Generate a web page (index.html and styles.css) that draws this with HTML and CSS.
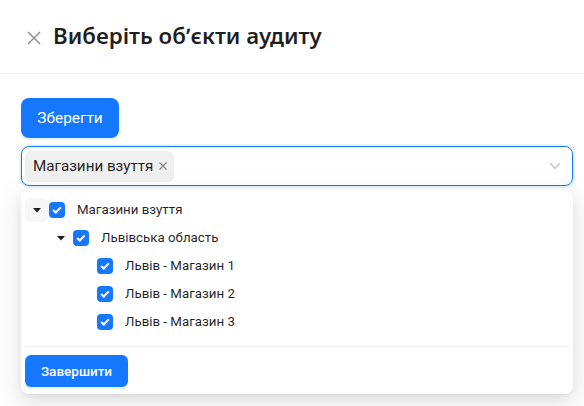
FILE: index.html
```html
<!DOCTYPE html>
<html lang="uk">
<head>
<meta charset="utf-8">
<link rel="stylesheet" href="styles.css">
</head>
<body>
<div class="drawer">
  <div class="header">
    <button class="close" aria-label="Закрити">
      <svg width="14" height="14" viewBox="0 0 14 14"><path d="M1 1 L13 13 M13 1 L1 13" stroke="currentColor" stroke-width="1.4" fill="none"/></svg>
    </button>
    <h1 class="title">Виберіть обʼєкти аудиту</h1>
  </div>
  <div class="content">
    <button class="btn btn-lg">Зберегти</button>
    <div class="select">
      <span class="tag">Магазини взуття<svg class="tag-x" width="10" height="10" viewBox="0 0 10 10"><path d="M1.5 1.5 L8.5 8.5 M8.5 1.5 L1.5 8.5" stroke="currentColor" stroke-width="1.2" fill="none"/></svg></span>
      <svg class="chev" width="12" height="8" viewBox="0 0 12 8"><path d="M1 1 L6 6.5 L11 1" stroke="currentColor" stroke-width="1.2" fill="none"/></svg>
    </div>
    <div class="dropdown">
      <div class="tree">
        <div class="node">
          <span class="switcher hover"><svg width="10" height="10" viewBox="0 0 10 10"><path d="M1 3 L9 3 L5 7.5 Z" fill="currentColor"/></svg></span>
          <span class="cb"><svg width="10" height="8" viewBox="0 0 10 8"><path d="M1.2 4 L3.8 6.5 L8.8 1.4" stroke="#fff" stroke-width="2" fill="none"/></svg></span>
          <span class="label">Магазини взуття</span>
        </div>
        <div class="node lvl1">
          <span class="switcher"><svg width="10" height="10" viewBox="0 0 10 10"><path d="M1 3 L9 3 L5 7.5 Z" fill="currentColor"/></svg></span>
          <span class="cb"><svg width="10" height="8" viewBox="0 0 10 8"><path d="M1.2 4 L3.8 6.5 L8.8 1.4" stroke="#fff" stroke-width="2" fill="none"/></svg></span>
          <span class="label">Львівська область</span>
        </div>
        <div class="node lvl2">
          <span class="switcher"></span>
          <span class="cb"><svg width="10" height="8" viewBox="0 0 10 8"><path d="M1.2 4 L3.8 6.5 L8.8 1.4" stroke="#fff" stroke-width="2" fill="none"/></svg></span>
          <span class="label">Львів - Магазин 1</span>
        </div>
        <div class="node lvl2">
          <span class="switcher"></span>
          <span class="cb"><svg width="10" height="8" viewBox="0 0 10 8"><path d="M1.2 4 L3.8 6.5 L8.8 1.4" stroke="#fff" stroke-width="2" fill="none"/></svg></span>
          <span class="label">Львів - Магазин 2</span>
        </div>
        <div class="node lvl2">
          <span class="switcher"></span>
          <span class="cb"><svg width="10" height="8" viewBox="0 0 10 8"><path d="M1.2 4 L3.8 6.5 L8.8 1.4" stroke="#fff" stroke-width="2" fill="none"/></svg></span>
          <span class="label">Львів - Магазин 3</span>
        </div>
      </div>
      <div class="divider"></div>
      <div class="footer">
        <button class="btn btn-md">Завершити</button>
      </div>
    </div>
  </div>
</div>
</body>
</html>
```

FILE: styles.css
```css
* { box-sizing: border-box; }
html, body { margin: 0; padding: 0; background: #fff; }
body {
  font-family: Roboto, "Noto Sans", sans-serif;
  color: rgba(0,0,0,0.88);
  width: 584px;
  height: 406px;
  overflow: hidden;
}
.header {
  height: 74px;
  border-bottom: 1px solid rgba(5,5,5,0.06);
  display: flex;
  align-items: center;
  padding: 0 0 0 26px;
  gap: 12px;
}
.close {
  border: 0;
  background: none;
  padding: 0;
  width: 15px;
  height: 15px;
  color: rgba(0,0,0,0.45);
  display: flex;
  align-items: center;
  justify-content: center;
  margin-top: 2px;
}
.title {
  margin: 0;
  font-family: "Noto Sans", sans-serif;
  font-size: 22.3px;
  font-weight: 600;
  line-height: 1.2;
  color: rgba(0,0,0,0.88);
}
.content {
  padding: 24px 11px 0 21px;
  display: flex;
  flex-direction: column;
}
.btn {
  border: 0;
  background: #1677ff;
  color: #fff;
  font-family: inherit;
  cursor: pointer;
  align-self: flex-start;
  box-shadow: 0 2px 0 rgba(5,145,255,0.1);
}
.btn-lg {
  height: 40px;
  padding: 0 15px;
  font-size: 15.4px;
  border-radius: 8px;
  width: 98px;
}
.btn-md {
  height: 32px;
  padding: 0 15px;
  font-size: 13.5px;
  font-weight: 500;
  border-radius: 6px;
  width: 103px;
}
.select {
  margin-top: 8px;
  height: 40px;
  border: 1px solid #1677ff;
  border-radius: 8px;
  box-shadow: 0 0 0 2px rgba(5,145,255,0.1);
  padding: 3px 11px 3px 3px;
  display: flex;
  align-items: center;
  justify-content: space-between;
}
.tag {
  height: 31px;
  background: rgba(0,0,0,0.06);
  border-radius: 6px;
  padding: 0 6px 0 8px;
  font-size: 15.2px;
  display: flex;
  align-items: center;
  gap: 5px;
}
.tag-x { color: rgba(0,0,0,0.45); }
.chev { color: rgba(0,0,0,0.25); }
.dropdown {
  margin-top: 4px;
  border-radius: 8px;
  background: #fff;
  box-shadow: 0 6px 16px 0 rgba(0,0,0,0.08), 0 3px 6px -4px rgba(0,0,0,0.12), 0 9px 28px 8px rgba(0,0,0,0.05);
  padding: 8px 4px 7px;
}
.tree { display: flex; flex-direction: column; }
.node {
  height: 28px;
  padding-bottom: 4px;
  display: flex;
  align-items: center;
  font-size: 13.3px;
}
.lvl1 { padding-left: 24px; }
.lvl2 { padding-left: 48px; }
.switcher {
  width: 24px;
  height: 24px;
  display: flex;
  align-items: center;
  justify-content: center;
  color: rgba(0,0,0,0.88);
  border-radius: 6px;
}
.switcher.hover { background: rgba(0,0,0,0.03); }
.cb {
  width: 16px;
  height: 16px;
  border-radius: 4px;
  background: #1677ff;
  display: flex;
  align-items: center;
  justify-content: center;
  margin-right: 8px;
}
.label {
  padding: 0 4px;
  line-height: 24px;
}
.divider {
  margin: 8px 0 8px;
  height: 1px;
  background: rgba(5,5,5,0.06);
}
.footer { display: flex; }
```
